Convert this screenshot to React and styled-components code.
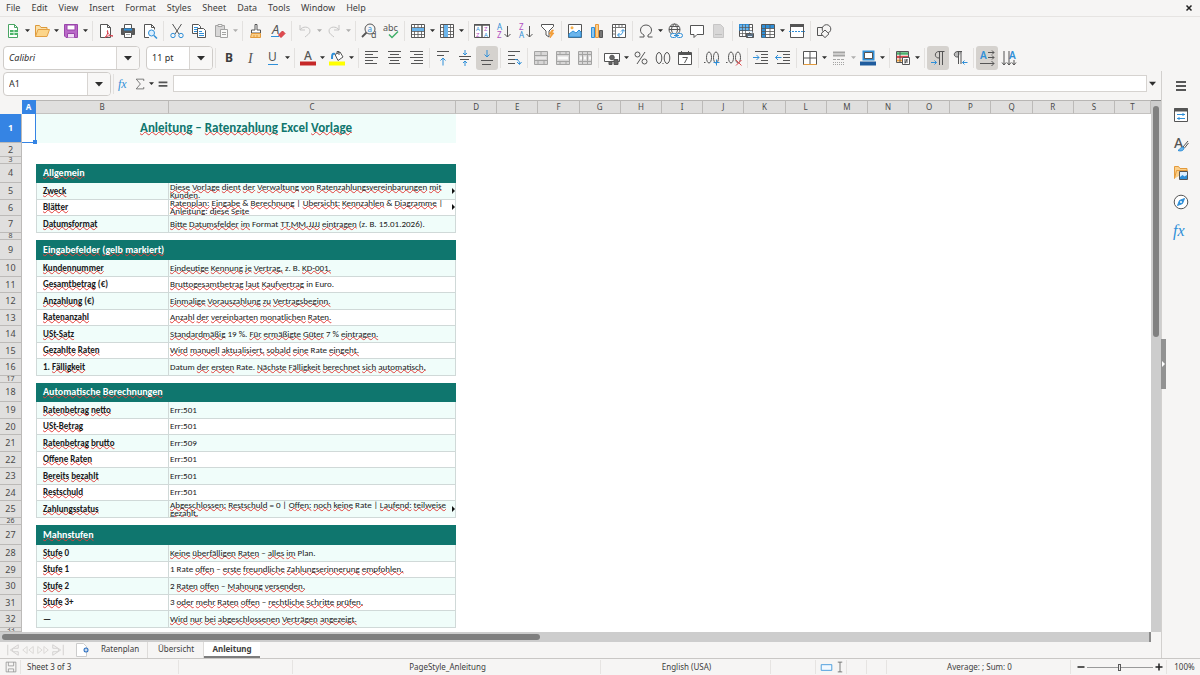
import React, { useState } from 'react';
import styled, { createGlobalStyle, css } from 'styled-components';

const UI_FONT = "'Noto Sans', 'Open Sans', sans-serif";
const SHEET_FONT = "Carlito, Lato, 'Noto Sans', sans-serif";

const dark = '#555';
const blue = '#2f8fd8';
const teal = '#0f766e';
const chrome = '#f6f5f4';

const GlobalStyle = createGlobalStyle`
  * { box-sizing: border-box; }
  body {
    margin: 0;
    background: ${chrome};
    color: #3d3d3d;
    font: 9px/12px ${UI_FONT};
  }
  button, input, select {
    font: inherit;
    color: inherit;
    margin: 0;
    padding: 0;
    border: 0;
    background: none;
  }
`;

const Window = styled.div`
  min-height: 100vh;
  display: flex;
  flex-direction: column;
`;

/* menu + toolbars */

const MenuBar = styled.nav`
  display: flex;
  align-items: center;
  height: 17px;
  padding: 0 7px 0 1px;
  border-bottom: 1px solid #e6e4e2;
`;

const MenuItem = styled.button`
  padding: 0 6px 0 5px;
`;

const CloseButton = styled.button`
  margin-left: auto;
  display: flex;
`;

const Toolbar = styled.div`
  display: flex;
  align-items: center;
  height: 27px;
  padding-left: 2px;
`;

const Tool = styled.button`
  flex: none;
  display: flex;
  align-items: center;
  justify-content: center;
  width: 22px;
  height: 24px;
  border-radius: 3px;
  background: ${p => (p.$pressed ? '#d5d2ce' : 'none')};
  opacity: ${p => (p.$off ? 0.5 : 1)};
`;

const Caret = styled.button`
  flex: none;
  width: 7px;
  height: 24px;
  display: flex;
  align-items: center;
  justify-content: center;
  opacity: ${p => (p.$off ? 0.35 : 1)};
`;

const Separator = styled.span`
  flex: none;
  width: 1px;
  height: 20px;
  margin: 0 2px;
  background: #e3e1df;

  ${Caret} + & {
    margin-left: 3px;
  }
`;

const Combo = styled.label`
  flex: none;
  display: grid;
  width: ${p => p.$width}px;
  height: 24px;
  margin: 0 ${p => p.$gap || 0}px 0 1px;
  border: 1px solid #cfccc9;
  border-radius: 4px;
  background: #fff;
  overflow: hidden;

  select {
    grid-area: 1 / 1;
    appearance: none;
    padding-left: 5px;
    color: #2e2e2e;
    font-style: ${p => (p.$italic ? 'italic' : 'normal')};
  }
`;

const ComboArrow = styled.span`
  grid-area: 1 / 1;
  justify-self: end;
  width: 23px;
  display: flex;
  align-items: center;
  justify-content: center;
  border-left: 1px solid #d8d5d2;
  background: #f8f7f6;
  pointer-events: none;
`;

/* work area */

const Workspace = styled.div`
  flex: 1;
  display: flex;
`;

const Document = styled.main`
  flex: 1;
  min-width: 0;
  display: flex;
  flex-direction: column;
`;

const FormulaBar = styled.div`
  display: flex;
  align-items: center;
  height: 29px;
  padding: 0 5px 4px 2px;
`;

const FormulaTool = styled(Tool)`
  width: 16px;
`;

const FormulaInput = styled.input`
  flex: 1;
  min-width: 0;
  height: 17px;
  margin: 0 2px;
  padding: 0 4px;
  border: 1px solid #d6d3d0;
  background: #fff;
`;

const SheetArea = styled.div`
  flex: 1;
  display: flex;
  background: #fff;
`;

const SheetView = styled.div`
  flex: 1;
  min-width: 0;
  overflow: hidden;
`;

const Grid = styled.table`
  table-layout: fixed;
  width: 100%;
  border-collapse: separate;
  border-spacing: 0;

  th, td {
    padding: 0;
  }
`;

const ColumnHead = styled.th`
  height: 14px;
  border-top: 1px solid #b8b6b4;
  border-right: 1px solid #bcbab8;
  border-bottom: 1px solid #c4c2c0;
  background: #e0dfde;
  color: #4a4a4a;
  font-size: 8px;
  font-weight: 400;
  line-height: 12px;

  ${p =>
    p.$active &&
    css`
      background: #3584e4;
      border-color: #3584e4;
      color: #fff;
      font-weight: 700;
    `}
`;

const Corner = styled.th`
  background: ${chrome};
`;

const RowHead = styled.th`
  border-right: 1px solid #bcbab8;
  border-bottom: 1px solid #bcbab8;
  background: ${p => (p.$active ? '#3584e4' : '#e0dfde')};
  color: ${p => (p.$active ? '#fff' : '#4a4a4a')};
  font-weight: ${p => (p.$active ? 700 : 400)};
`;

const RowNumber = styled.div`
  display: flex;
  align-items: center;
  justify-content: center;
  height: ${p => p.$height - 1}px;
  font-size: ${p => (p.$height < 10 ? 7 : 9)}px;
  overflow: hidden;
`;

const CellBox = styled.div`
  display: flex;
  align-items: center;
  height: ${p => p.$height - 1}px;
  padding-bottom: 1px;
  overflow: hidden;
`;

const Cell = styled.td`
  font-family: ${SHEET_FONT};
  font-size: 9px;
  line-height: 8px;
  color: #1a1a1a;
`;

const LabelCell = styled(Cell)`
  border: solid #d0d9d8;
  border-width: 0 1px 1px;
  background: ${p => (p.$tinted ? '#f0fdfa' : '#fff')};
  font-weight: 700;

  ${CellBox} {
    padding-left: 6px;
  }
`;

const TextCell = styled(Cell)`
  border: solid #d0d9d8;
  border-width: 0 1px 1px 0;
  background: ${p => (p.$tinted ? '#f0fdfa' : '#fff')};

  ${CellBox} {
    justify-content: space-between;
    padding-left: 1px;
    white-space: pre;
  }
`;

const SectionCell = styled(Cell)`
  background: ${teal};
  color: #fff;
  font-size: 10px;
  line-height: 12px;
  font-weight: 700;

  ${CellBox} {
    padding-left: 7px;
  }
`;

const TitleCell = styled(Cell)`
  background: #f0fdfa;
  color: ${teal};
  font-size: 13px;
  line-height: 16px;
  font-weight: 700;

  ${CellBox} {
    justify-content: center;
  }
`;

const ActiveCell = styled.td`
  position: relative;
  border-right: 1px solid #3584e4;
  border-bottom: 1px solid #3584e4;
  background: #fff;

  &::after {
    content: '';
    position: absolute;
    right: -2px;
    bottom: -2px;
    width: 4px;
    height: 4px;
    background: #3584e4;
  }
`;

const Misspelled = styled.span`
  text-decoration: underline wavy #e2403c 1px;
  text-underline-offset: -1px;
  text-decoration-skip-ink: none;
`;

const VScroll = styled.div`
  width: 10px;
  padding: 5px 2px 0;
  border-top: 1px solid #8a8a8a;
  background: #cdcdcd;
`;

const VThumb = styled.div`
  height: 44%;
  border-radius: 3px;
  background: #808080;
`;

const HScroll = styled.div`
  height: 10px;
  margin-right: 10px;
  padding: 2px;
  border-right: 2px solid #8a8a8a;
  background: #cdcdcd;
`;

const HThumb = styled.div`
  width: 47%;
  height: 6px;
  border-radius: 3px;
  background: #7f7f7f;
`;

const TabBar = styled.div`
  display: flex;
  align-items: center;
  height: 16px;
  padding-left: 6px;
  font-size: 8px;
`;

const TabNav = styled.button`
  display: flex;
  width: 15px;
`;

const AddSheet = styled.button`
  display: flex;
  margin: 0 2px 0 8px;
`;

const Tab = styled.button`
  height: 16px;
  width: 56px;
  border-bottom: 2px solid ${p => (p.$active ? '#7d7d7d' : 'transparent')};
  background: ${p => (p.$active ? '#fff' : 'none')};
  font-weight: ${p => (p.$active ? 700 : 400)};

  & + & {
    box-shadow: -1px 0 0 #dddbd9;
  }
`;

const Sidebar = styled.aside`
  position: relative;
  width: 39px;
  display: flex;
  flex-direction: column;
  align-items: center;
  gap: 5px;
  padding-top: 3px;
  border-left: 1px solid #d2d0ce;
`;

const SidebarHandle = styled.button`
  position: absolute;
  left: -1px;
  top: 268px;
  width: 5px;
  height: 50px;
  display: flex;
  align-items: center;
  background: #929292;
`;

const StatusBar = styled.footer`
  display: grid;
  grid-template-columns:
    21px 158fr 114fr 308fr 170fr 45fr 31px 20px 20px
    184fr 96px 33px;
  align-items: center;
  height: 17px;
  border-top: 1px solid #c9c7c5;
  font-size: 8px;
`;

const StatusItem = styled.div`
  display: flex;
  align-items: center;
  justify-content: ${p => (p.$start ? 'flex-start' : 'center')};
  height: 14px;
  padding-left: ${p => (p.$start ? 6 : 2)}px;
  border-right: 1px solid #e6e4e2;

  &:last-child {
    border: 0;
  }
`;

const ModeItem = styled(StatusItem)`
  justify-content: flex-end;
  gap: 1px;
`;

const ZoomItem = styled(StatusItem)`
  gap: 2px;

  button {
    display: flex;
  }
`;

const ZoomRange = styled.input`
  appearance: none;
  width: 66px;
  height: 10px;
  background: linear-gradient(#9a9a9a, #9a9a9a) center / 100% 1px no-repeat;

  &::-webkit-slider-thumb {
    appearance: none;
    width: 3px;
    height: 7px;
    border: 1px solid #5a5a5a;
    background: #eee;
  }
`;

/* icons, all on a 16px field */

const Svg = ({ children, size = 16 }) => (
  <svg
    width={size}
    height={size}
    viewBox="0 0 16 16"
    overflow="visible"
    fill="none"
    stroke={dark}
    strokeWidth="1"
    aria-hidden="true"
  >
    {children}
  </svg>
);

const Arrow = ({ size = 5, color = '#2e2e2e' }) => (
  <svg width={size} height={size} viewBox="0 0 8 8" aria-hidden="true">
    <path d="M0 2h8L4 6.500z" fill={color} />
  </svg>
);

const G = ({ x, y, s = 7, c = dark, i, f = UI_FONT, children, w = 400 }) => (
  <text
    x={x}
    y={y}
    fontSize={s}
    fill={c}
    stroke="none"
    fontFamily={f}
    fontStyle={i ? 'italic' : 'normal'}
    fontWeight={w}
  >
    {children}
  </text>
);

const lines = (list, color = dark) => (
  <path
    stroke={color}
    d={list.map(([x1, x2, y]) => `M${x1} ${y}.5H${x2}`).join('')}
  />
);

const icons = {
  new: (
    <>
      <path d="M3.500 1.500h6l3 3v10h-9z" fill="#fff" stroke="#4aa564" />
      <path d="M9.500 1.500v3h3" stroke="#4aa564" />
      <path d="M5 7h8v5H5z" fill="#4db36a" stroke="none" />
      <path d="M5 9.500h8M9 7v5" stroke="#d6f2dc" />
    </>
  ),
  open: (
    <>
      <path d="M1.500 13.500v-11h4l1.500 2h6v2" fill="#fbe0a8" stroke="#dd9a3b" />
      <path d="M1.500 13.500l2.500-7h11.500l-2.500 7z" fill="#fcd58a" stroke="#e3a044" />
    </>
  ),
  save: (
    <>
      <path d="M1.500 1.500h13v13H3l-1.500-1.500z" fill="#b968c7" stroke="#9a45ab" />
      <path d="M4 2h8v5H4z" fill="#fff" stroke="#9a45ab" />
      <path d="M4.500 14.500v-4h7v4" fill="#f0dcf4" stroke="#9a45ab" />
    </>
  ),
  pdf: (
    <>
      <path d="M2.500 1.500h7l3 3v10h-10z" fill="#fff" />
      <path d="M9.500 1.500v3h3" />
      <path d="M7 14.500c2-2 3.500-5 2.500-7-1 2 2 5.500 5.500 5.500-3-1-6 0-8 1.500z" stroke="#d9414e" />
    </>
  ),
  print: (
    <>
      <path d="M4.500 5V1.500h7V5" fill="#fff" />
      <path d="M1.500 5.500h13v6h-13z" fill="#5a5a5a" />
      <path d="M4 6.500h8" stroke={blue} strokeWidth="2" />
      <path d="M4.500 9.500h7v5h-7z" fill="#fff" />
      <path d="M6 11.500h4" stroke="#aaa" />
    </>
  ),
  preview: (
    <>
      <path d="M7 14.500H2.500v-13h7l3 3v2" fill="#fff" />
      <path d="M9.500 1.500v3h3" />
      <circle cx="9.500" cy="10" r="3" stroke={blue} fill="#dcefff" />
      <path d="M12 12.500l3 3" stroke={blue} strokeWidth="1.500" />
    </>
  ),
  cut: (
    <>
      <path d="M3.500 1l6.500 10M12.500 1L6 11" />
      <circle cx="4" cy="12.500" r="2.200" stroke={blue} />
      <circle cx="12" cy="12.500" r="2.200" stroke={blue} />
    </>
  ),
  copy: (
    <>
      <path d="M1.500 1.500h6l2 2v7h-8z" fill="#fff" />
      <path d="M3 4.500h4M3 6.500h4M3 8.500h3" stroke={blue} />
      <path d="M6.500 5.500h6l2 2v7h-8z" fill="#fff" />
      <path d="M8 8.500h3M8 10.500h5M8 12.500h5" stroke={blue} />
    </>
  ),
  paste: (
    <>
      <path d="M2.500 2.500h9v11h-9z" fill="#bbb" />
      <path d="M5 1.500h4v2H5z" fill="#fff" />
      <path d="M7.500 6.500h7v8h-7z" fill="#fff" />
      <path d="M9 9.500h4M9 11.500h4" />
    </>
  ),
  brush: (
    <>
      <path d="M7 1.500h2V7h3.500v3h-9V7H7z" fill="#fff" />
      <path d="M3.500 10.500h9v4h-10z" fill="#fbd08b" stroke="#e39a3b" />
      <path d="M6 12v2M9 12v2" stroke="#e39a3b" />
    </>
  ),
  clear: (
    <>
      <G x={2} y={11} s={13} i>A</G>
      <path d="M1 13.500h8" stroke={blue} />
      <path d="M8.500 12l4-4 2.500 2.500-4 4z" fill="#e04a4f" stroke="#d0393f" />
    </>
  ),
  undo: <path d="M3 2v5h5M3 7c2-4 10-4 10 1 0 3-3 4-5 6" stroke="#999" />,
  redo: <path d="M13 2v5H8M13 7C11 3 3 3 3 8c0 3 3 4 5 6" stroke="#999" />,
  find: (
    <>
      <circle cx="9" cy="6" r="5" />
      <path d="M5.500 9.500L1 14" strokeWidth="1.800" />
      <G x={6.500} y={9} s={8} c={blue}>a</G>
      <G x={10} y={15} s={9}>d</G>
    </>
  ),
  spell: (
    <>
      <G x={0} y={8} s={9}>abc</G>
      <path d="M6 11.500l3 3L15 8.500" stroke="#41b06a" strokeWidth="1.500" />
    </>
  ),
  row: (
    <>
      <path d="M1.500 1.500h13v13h-13z" fill="#fff" />
      <path d="M1.500 4.500h13M1.500 8.500h13M1.500 11.500h13M4.500 1.500v13M8 1.500v13M11.500 1.500v13" strokeWidth=".8" />
      <path d="M2 5h12v3H2z" fill="#6bb5ec" stroke="none" />
    </>
  ),
  col: (
    <>
      <path d="M1.500 1.500h13v13h-13z" fill="#fff" />
      <path d="M1.500 4.500h13M1.500 8.500h13M1.500 11.500h13M4.500 1.500v13M11.500 1.500v13" strokeWidth=".8" />
      <path d="M5 2h4v12H5z" fill="#6bb5ec" stroke="none" />
    </>
  ),
  sort: (
    <>
      <path d="M.5 1.500h15v13H.5z" fill="#fff" />
      <path d="M0 2h16M8 2v13" strokeWidth="1.500" />
      <G x={2} y={8} s={6} c={blue}>A</G>
      <G x={2} y={14} s={6} c="#b14fc0">Z</G>
      <G x={10} y={8} s={6} c="#b14fc0">Z</G>
      <G x={10} y={14} s={6} c={blue}>A</G>
    </>
  ),
  asc: (
    <>
      <G x={1} y={7} s={8} c={blue}>A</G>
      <G x={1} y={15} s={8} c="#b14fc0">Z</G>
      <path d="M11.500 3v11M8.500 11l3 3 3-3" />
    </>
  ),
  desc: (
    <>
      <G x={1} y={7} s={8} c="#b14fc0">Z</G>
      <G x={1} y={15} s={8} c={blue}>A</G>
      <path d="M11.500 3v11M8.500 11l3 3 3-3" />
    </>
  ),
  filter: (
    <>
      <path d="M1.500 1.500h12v2L9 8v6l-3-2V8L1.500 3.500z" fill="#fff" />
      <path d="M12 7l-3 4h2l-1 4 4-5h-2l1.500-3z" fill="#f3a33c" stroke="#f08c1e" strokeWidth=".6" />
    </>
  ),
  image: (
    <>
      <path d="M1.500 1.500h13v13h-13z" fill="#fff" />
      <path d="M2 13V11l4-3 3 2 3-3 2 2v5H2z" fill="#6bb5ec" stroke={blue} />
      <circle cx="5" cy="4.800" r="1.500" fill="#f6b04e" stroke="none" />
    </>
  ),
  chart: (
    <>
      <path d="M2.500 4.500h3v10h-3z" fill="#8cc8f2" stroke={blue} />
      <path d="M6.500 1.500h3v13h-3z" fill="#fbd08b" stroke="#e8963a" />
      <path d="M10.500 7.500h3v7h-3z" fill="#777" />
    </>
  ),
  pivot: (
    <>
      <path d="M1.500 1.500h13v13h-13z" fill="#fff" />
      <path d="M2 4.500h12M4.500 2v12M8 2v2M11 2v2M2 8h2M2 11h2" stroke="#777" />
      <path d="M7 12c4 0 5-2 5-5M10 8.500l2-2 2 2M8.500 10l-2 2 2 2" stroke={blue} />
    </>
  ),
  omega: (
    <path d="M1.500 14h4.500v-2C3.500 11 2.500 9 2.500 7c0-3 2.500-5 5.500-5s5.500 2 5.500 5c0 2-1 4-3.500 5v2h4.500" />
  ),
  link: (
    <>
      <circle cx="7.500" cy="6.500" r="5.500" />
      <path d="M2 6.500h11M7.500 1c-4 3-4 8 0 11M7.500 1c4 3 4 8 0 11M3 3.500h9" />
      <rect x="3.500" y="10.500" width="6" height="4" rx="2" fill={chrome} stroke={blue} />
      <rect x="9.500" y="10.500" width="6" height="4" rx="2" fill={chrome} stroke={blue} />
      <path d="M7 12.500h5" stroke={blue} />
    </>
  ),
  comment: <path d="M1.500 2.500h13v9H8l-3 3v-3H1.500z" fill="#fff" />,
  header: (
    <>
      <path d="M2.500 1.500h7l3 3v10h-10z" fill="#bbb" stroke="#999" />
      <path d="M4 11.500h7" stroke="#888" />
    </>
  ),
  printArea: (
    <>
      <path d="M1.500 1.500h13v12h-13z" fill="#fff" />
      <path d="M1.500 1.500h9v6h-9z" fill="#6bb5ec" stroke={blue} />
      <path d="M1.500 4.500h13M1.500 7.500h13M1.500 10.500h13M4.500 1.500v12M7.500 1.500v12M11.500 1.500v12" strokeWidth=".7" />
      <path d="M8.500 10.500h7v4h-7z" fill="#5a6f82" />
      <path d="M10 8.500h4v2M10 13.500h4" stroke="#dcefff" />
    </>
  ),
  freeze: (
    <>
      <path d="M1.500 1.500h13v13h-13z" fill="#fff" />
      <path d="M2 2h12v3.500H6v9H2z" fill={blue} stroke="none" />
      <path d="M1.500 5.500h13M1.500 8.500h13M1.500 11.500h13M5.500 1.500v13M10 1.500v13" strokeWidth=".8" />
    </>
  ),
  split: (
    <>
      <path d="M1.500 1.500h13v13h-13z" fill="#fff" />
      <path d="M1 2.500h14" strokeWidth="3" />
      <path d="M0 8.500h16" stroke={blue} strokeDasharray="2 1" />
    </>
  ),
  shapes: (
    <>
      <path d="M1.500 4.500h7v8h-7z" fill={chrome} />
      <circle cx="10.500" cy="6" r="4.300" fill={chrome} />
      <path d="M9 7l4 3.800-4 3.800-4-3.800z" fill={chrome} />
    </>
  ),
  bold: <G x={4} y={12} s={12} w={700} c="#3d3d3d">B</G>,
  italic: <G x={5} y={13} s={14} i f="'Liberation Serif', serif">I</G>,
  underline: (
    <>
      <G x={3} y={11} s={12}>U</G>
      <path d="M3 14.500h10" stroke={blue} />
    </>
  ),
  fontColor: (
    <>
      <G x={4} y={10} s={12} w={500}>A</G>
      <path d="M0 13.500h16" stroke="#c62828" strokeWidth="4" />
    </>
  ),
  fill: (
    <>
      <path d="M6 4.500l5-2.500 3 5-5 3.500z" fill="#fff" />
      <path d="M8 4V1.500h2V5" />
      <path d="M6 4C3 3 3 5 3 9" stroke={blue} strokeWidth="2" />
      <path d="M0 13.500h16" stroke="#ffff00" strokeWidth="4" />
    </>
  ),
  left: lines([[1, 14, 1], [1, 9, 4], [1, 14, 7], [1, 9, 10], [1, 13, 13]]),
  center: lines([[2, 15, 1], [4, 13, 4], [2, 15, 7], [4, 13, 10], [3, 14, 13]]),
  right: lines([[2, 15, 1], [6, 15, 4], [2, 15, 7], [6, 15, 10], [3, 15, 13]]),
  vtop: (
    <>
      {lines([[2, 14, 1], [2, 9, 5]])}
      <path d="M8 15.500V8M5.500 10.500L8 8l2.500 2.500" stroke={blue} />
    </>
  ),
  vmid: (
    <>
      {lines([[2, 14, 6], [3, 12, 9]])}
      <path d="M8 0v4.500M6 3l2 2 2-2M8 16v-4.500M6 13l2-2 2 2" stroke={blue} />
    </>
  ),
  vbot: (
    <>
      {lines([[2, 14, 10], [3, 12, 14]])}
      <path d="M8 0v7M5.500 4.500L8 7l2.500-2.500" stroke={blue} />
    </>
  ),
  wrap: (
    <>
      {lines([[2, 14, 1], [2, 9, 5], [2, 12, 9], [2, 9, 13]])}
      <path d="M9 9.500c3 0 4.500 1 4.500 4.500M11 12l2.500 2.500L15.500 12" stroke={blue} />
    </>
  ),
  merge: (
    <>
      <path d="M1.500 1.500h13v13h-13z" fill="#bbb" />
      <path d="M2 5.500h13M2 10.500h13M8 2v3M5 11v3M11 11v3" />
      <path d="M3 8h10" stroke="#fff" />
    </>
  ),
  mergeCenter: (
    <>
      <path d="M1.500 1.500h13v13h-13z" fill="#bbb" />
      <path d="M2 4.500h13M2 11.500h13M5 2v2M11 2v2M5 12v2M11 12v2" />
      <path d="M3 8h10" stroke="#fff" strokeWidth="3" />
    </>
  ),
  unmerge: (
    <>
      <path d="M1.500 1.500h13v13h-13z" fill="#bbb" />
      <path d="M2 4.500h13M2 11.500h13M5.500 2v12M10.500 2v12" />
      <path d="M3 8h2M7 8h2M12 8h2" stroke="#fff" strokeWidth="3" />
    </>
  ),
  currency: (
    <>
      <path d="M.5 3.500h15v8H.5z" fill="#fff" />
      <circle cx="8" cy="7.500" r="2.300" fill="#666" />
      <path d="M5 11.500h3v3H5zM10 9.500h4v5h-4z" fill="#666" />
    </>
  ),
  percent: (
    <>
      <circle cx="4.500" cy="4.500" r="2.500" />
      <circle cx="11.500" cy="11.500" r="2.500" />
      <path d="M12 2L4 14" />
    </>
  ),
  number: (
    <>
      <ellipse cx="4" cy="8" rx="2.800" ry="5.500" />
      <ellipse cx="12" cy="8" rx="2.800" ry="5.500" />
      <path d="M7.500 13.500h1" />
    </>
  ),
  date: (
    <>
      <path d="M1.500 2.500h13v12h-13z" fill="#fff" />
      <path d="M1 4h14" strokeWidth="2" />
      <path d="M4.500 1v3M11.500 1v3M5.500 7.500h5L7.500 13" />
    </>
  ),
  addDec: (
    <>
      <ellipse cx="5" cy="7.500" rx="2.500" ry="5.500" />
      <ellipse cx="12" cy="7.500" rx="2.500" ry="5.500" />
      <path d="M0 12.500h1.500" />
      <path d="M12.500 9.500v6M9.500 12.500h6" stroke={blue} />
    </>
  ),
  delDec: (
    <>
      <ellipse cx="5" cy="7.500" rx="2.500" ry="5.500" />
      <ellipse cx="12" cy="7.500" rx="2.500" ry="5.500" />
      <path d="M0 12.500h1.500" />
      <path d="M10 10l5.500 5.500M15.500 10L10 15.500" stroke="#e04a4f" />
    </>
  ),
  indent: (
    <>
      {lines([[2, 15, 1], [8, 15, 4], [8, 15, 7], [8, 15, 10], [2, 15, 13]])}
      <path d="M0 7.500h6M3.500 5L6 7.500 3.500 10" stroke={blue} />
    </>
  ),
  outdent: (
    <>
      {lines([[2, 15, 1], [8, 15, 4], [8, 15, 7], [8, 15, 10], [2, 15, 13]])}
      <path d="M6.500 7.500H.5M3 5L.5 7.500 3 10" stroke={blue} />
    </>
  ),
  borders: (
    <>
      <path d="M1.500 1.500h13v13h-13zM8 1.500v13M1.500 8h13" fill="#fff" />
      <path d="M1.500 14.500h13" stroke="#e39a3b" />
    </>
  ),
  borderStyle: (
    <>
      <path d="M2 2.500h12M2 5.500h12" strokeWidth="2" />
      <path d="M2 9.500h12" strokeDasharray="3 1" />
      <path d="M2 12.500h12M2 14.500h12" strokeDasharray="1 1" />
    </>
  ),
  borderColor: (
    <>
      <path d="M3.500 1.500h10v8h-10z" fill="#fff" stroke={blue} strokeWidth="2" />
      <path d="M4.500 2.500h8v6h-8z" />
      <path d="M0 13.500h16" stroke="#1f5c9e" strokeWidth="4" />
    </>
  ),
  conditional: (
    <>
      <path d="M1.500 1.500h12v11h-12z" fill="#fff" />
      <path d="M2 3.500h11" stroke="#4bb06d" strokeWidth="2.500" />
      <path d="M2 7h11" stroke="#e04a4f" strokeWidth="2.500" />
      <path d="M2 10.500h11" stroke="#f3a33c" strokeWidth="2" />
      <path d="M5 1.500v11" />
      <path d="M7.500 7.500h7v7h-7z" fill="#fff" />
      <path d="M9 10h4M9 12h4M12 9l-2 4.500" />
    </>
  ),
  ltr: (
    <>
      <path d="M9.500 8C4 8.500 4 1.500 9 1.500h5.500M9.500 1.500V15M12.500 1.500V15" />
      <path d="M1 12.500h5.500M4.500 10.500l2 2-2 2" stroke={blue} />
    </>
  ),
  rtl: (
    <>
      <path d="M6 7C1 7.500 1 1.500 6 1.500h4M6.500 1.500V14M9 1.500V14" fill="#bbb" />
      <path d="M15.500 12.500h-5M12.500 10.500l-2 2 2 2" stroke={blue} />
    </>
  ),
  horizontal: (
    <>
      <G x={1} y={9} s={10} c={blue} w={600}>A</G>
      <path d="M9 2.500h6M13 .5l2 2-2 2M9 7.500h6M13 5.500l2 2-2 2M1 13.500h14M12.500 11l2.500 2.500-2.500 2.500" />
    </>
  ),
  vertical: (
    <>
      <G x={8} y={9} s={10} c={blue} w={600}>A</G>
      <path d="M3 1v14M1 12.500L3 15l2-2.500M8 1v14M6 12.500L8 15l2-2.500M13 10v5M11 12.500l2 2.500 2-2.500" />
    </>
  ),
  fx: (
    <G x={0} y={13} s={16} c={blue} i f="'Liberation Serif', serif">fx</G>
  ),
  sigma: <path d="M13 4V1.500H3L8.500 8 3 14.500h10V12" />,
  equals: <path d="M3 6h10M3 10h10" strokeWidth="2" />,
  menu: <path d="M3 4h10M3 8h10M3 12h10" stroke="#222" strokeWidth="1.500" />,
  properties: (
    <>
      <path d="M1.500 1.500h13v13h-13z" fill="#fff" />
      <path d="M1 3h14" strokeWidth="3" />
      <path d="M4 7.500h8M4 11.500h8M10 6v3M6 10v3" stroke={blue} />
    </>
  ),
  styles: (
    <>
      <G x={1} y={12} s={14} w={500}>A</G>
      <path d="M15 5l-5 6M15.500 7l-4 5" />
      <path d="M10 11c-2 0-3 2-5 3.500 3 1 6 0 6-2.500z" fill="#6bb5ec" stroke={blue} />
    </>
  ),
  gallery: (
    <>
      <path d="M1.500 13.500v-12h4l1.500 2h7v3M1.500 13.500l2-8h11" fill="#fbd08b" stroke="#e39a3b" />
      <path d="M6.500 6.500h8v8h-8z" fill="#dcefff" />
      <path d="M7 14v-2l2.500-2 2 1.500L14 10v4z" fill={blue} stroke="none" />
    </>
  ),
  navigator: (
    <>
      <circle cx="8" cy="8" r="6.800" fill="#fff" />
      <path d="M11.500 4.500L9.500 9.500l-5 2L6.500 6.500z" fill={blue} stroke={blue} />
      <circle cx="8" cy="8" r="1" fill="#fff" stroke="none" />
    </>
  ),
  first: <path d="M2 2v12M14 2L5 8l9 6v-4H9l-2-2 2-2h5z" stroke="#cfcdcb" />,
  prev: <path d="M7 4L2 8l5 4zM14 4L9 8l5 4z" stroke="#d8d6d4" />,
  next: <path d="M2 4l5 4-5 4zM9 4l5 4-5 4z" stroke="#d8d6d4" />,
  last: <path d="M14 2v12M2 2l9 6-9 6v-4h5l2-2-2-2H2z" stroke="#cfcdcb" />,
  addSheet: (
    <>
      <path d="M2.500 1.500h7l3 3v10h-10z" fill="#fff" stroke="#ccc" />
      <circle cx="12" cy="8" r="2.500" fill="#2b6fc0" stroke="none" />
      <path d="M12 6.500v3M10.500 8h3" stroke="#fff" />
    </>
  ),
  saved: (
    <path
      d="M1.500 1.500h13v13h-13zM4.500 1.500v5h7v-5M4.500 14.500v-4h7v4"
      stroke="#8f8f8f"
    />
  ),
  selection: <path d="M1.500 4.500h13v7h-13z" stroke={blue} fill="#f2f9ff" />,
  cursor: <path d="M5 1.500h6M8 1.500v13M5 14.500h6" />,
  minus: <path d="M1 8h14" stroke="#222" strokeWidth="3" />,
  plus: <path d="M1 8h14M8 1v14" stroke="#222" strokeWidth="3" />,
  close: <path d="M3 3l10 10M13 3L3 13" stroke="#222" strokeWidth="3" />
};

/* [icon, label, options]; '|' is a separator */
const standardTools = [
  ['new', 'New', { menu: true }],
  ['open', 'Open', { menu: true }],
  ['save', 'Save', { menu: true }],
  '|',
  ['pdf', 'Export as PDF'],
  ['print', 'Print'],
  ['preview', 'Print Preview'],
  '|',
  ['cut', 'Cut'],
  ['copy', 'Copy'],
  ['paste', 'Paste', { menu: true, off: true }],
  '|',
  ['brush', 'Clone Formatting'],
  ['clear', 'Clear Direct Formatting'],
  '|',
  ['undo', 'Undo', { menu: true, off: true }],
  ['redo', 'Redo', { menu: true, off: true }],
  '|',
  ['find', 'Find & Replace'],
  ['spell', 'Spelling'],
  '|',
  ['row', 'Row', { menu: true }],
  ['col', 'Column', { menu: true }],
  '|',
  ['sort', 'Sort'],
  ['asc', 'Sort Ascending'],
  ['desc', 'Sort Descending'],
  ['filter', 'AutoFilter'],
  '|',
  ['image', 'Insert Image'],
  ['chart', 'Insert Chart'],
  ['pivot', 'Insert Pivot Table'],
  '|',
  ['omega', 'Special Character', { menu: true }],
  ['link', 'Insert Hyperlink'],
  ['comment', 'Insert Comment'],
  ['header', 'Headers and Footers', { off: true }],
  '|',
  ['printArea', 'Define Print Area'],
  ['freeze', 'Freeze Rows and Columns', { menu: true }],
  ['split', 'Split Window'],
  '|',
  ['shapes', 'Show Draw Functions']
];

const formatTools = [
  '|',
  ['bold', 'Bold'],
  ['italic', 'Italic'],
  ['underline', 'Underline', { menu: true }],
  '|',
  ['fontColor', 'Font Color', { menu: true }],
  ['fill', 'Background Color', { menu: true }],
  '|',
  ['left', 'Align Left'],
  ['center', 'Center Horizontally'],
  ['right', 'Align Right'],
  '|',
  ['vtop', 'Align Top'],
  ['vmid', 'Center Vertically'],
  ['vbot', 'Align Bottom', { pressed: true }],
  '|',
  ['wrap', 'Wrap Text'],
  '|',
  ['merge', 'Merge and Center', { off: true }],
  ['mergeCenter', 'Merge Cells', { off: true }],
  ['unmerge', 'Unmerge Cells', { off: true }],
  '|',
  ['currency', 'Currency', { menu: true }],
  ['percent', 'Percent'],
  ['number', 'Number'],
  ['date', 'Date'],
  '|',
  ['addDec', 'Add Decimal Place'],
  ['delDec', 'Delete Decimal Place'],
  '|',
  ['indent', 'Increase Indent'],
  ['outdent', 'Decrease Indent'],
  '|',
  ['borders', 'Borders', { menu: true }],
  ['borderStyle', 'Border Style', { menu: true, off: true }],
  ['borderColor', 'Border Color', { menu: true }],
  '|',
  ['conditional', 'Conditional Formatting', { menu: true }],
  '|',
  ['ltr', 'Left-To-Right', { pressed: true }],
  ['rtl', 'Right-To-Left'],
  '|',
  ['horizontal', 'Text direction left to right', { pressed: true }],
  ['vertical', 'Text direction top to bottom']
];

const sidebarTools = [
  ['menu', 'Sidebar Settings'],
  ['properties', 'Properties'],
  ['styles', 'Styles'],
  ['gallery', 'Gallery'],
  ['navigator', 'Navigator'],
  ['fx', 'Functions']
];

const menus = [
  'File', 'Edit', 'View', 'Insert', 'Format', 'Styles',
  'Sheet', 'Data', 'Tools', 'Window', 'Help'
];

const restColumns = 'DEFGHIJKLMNOPQRST'.split('');

const rows = [
  { h: 29, title: 'Anleitung – Ratenzahlung Excel Vorlage' },
  { h: 14 },
  { h: 7 },
  { h: 19, section: 'Allgemein' },
  {
    h: 17,
    label: 'Zweck',
    text:
      'Diese Vorlage dient der Verwaltung von Ratenzahlungsvereinbarungen mit\nKunden.',
    more: true,
    tinted: true
  },
  {
    h: 16,
    label: 'Blätter',
    text:
      'Ratenplan: Eingabe & Berechnung | Übersicht: Kennzahlen & Diagramme |\nAnleitung: diese Seite',
    more: true
  },
  {
    h: 17,
    label: 'Datumsformat',
    text: 'Bitte Datumsfelder im Format TT.MM.JJJJ eintragen (z. B. 15.01.2026).',
    tinted: true
  },
  { h: 7 },
  { h: 20, section: 'Eingabefelder (gelb markiert)' },
  { h: 17, label: 'Kundennummer', text: 'Eindeutige Kennung je Vertrag, z. B. KD-001.', tinted: true },
  { h: 16, label: 'Gesamtbetrag (€)', text: 'Bruttogesamtbetrag laut Kaufvertrag in Euro.' },
  { h: 17, label: 'Anzahlung (€)', text: 'Einmalige Vorauszahlung zu Vertragsbeginn.', tinted: true },
  { h: 16, label: 'Ratenanzahl', text: 'Anzahl der vereinbarten monatlichen Raten.' },
  { h: 17, label: 'USt-Satz', text: 'Standardmäßig 19 %. Für ermäßigte Güter 7 % eintragen.', tinted: true },
  { h: 16, label: 'Gezahlte Raten', text: 'Wird manuell aktualisiert, sobald eine Rate eingeht.' },
  {
    h: 17,
    label: '1. Fälligkeit',
    text: 'Datum der ersten Rate. Nächste Fälligkeit berechnet sich automatisch.',
    tinted: true
  },
  { h: 7 },
  { h: 19, section: 'Automatische Berechnungen' },
  { h: 17, label: 'Ratenbetrag netto', text: 'Err:501', tinted: true },
  { h: 16, label: 'USt-Betrag', text: 'Err:501' },
  { h: 17, label: 'Ratenbetrag brutto', text: 'Err:509', tinted: true },
  { h: 16, label: 'Offene Raten', text: 'Err:501' },
  { h: 17, label: 'Bereits bezahlt', text: 'Err:501', tinted: true },
  { h: 16, label: 'Restschuld', text: 'Err:501' },
  {
    h: 17,
    label: 'Zahlungsstatus',
    text:
      'Abgeschlossen: Restschuld = 0 | Offen: noch keine Rate | Laufend: teilweise\ngezahlt.',
    more: true,
    tinted: true
  },
  { h: 7 },
  { h: 20, section: 'Mahnstufen' },
  { h: 17, label: 'Stufe 0', text: 'Keine überfälligen Raten – alles im Plan.', tinted: true },
  { h: 16, label: 'Stufe 1', text: '1 Rate offen – erste freundliche Zahlungserinnerung empfohlen.' },
  { h: 17, label: 'Stufe 2', text: '2 Raten offen – Mahnung versenden.', tinted: true },
  { h: 16, label: 'Stufe 3+', text: '3 oder mehr Raten offen – rechtliche Schritte prüfen.' },
  { h: 17, label: '—', text: 'Wird nur bei abgeschlossenen Verträgen angezeigt.', tinted: true },
  { h: 4 }
];

// words the English (USA) dictionary accepts
const known = ['Format', 'in', 'Euro', 'Rate', 'Datum', 'Plan', 'Excel', 'z', 'B', 'Err'];

const Spelled = ({ children }) =>
  children.split(/(\s+)/).map((word, i) => {
    const bare = word.replace(/[^\p{L}]/gu, '');
    if (!bare || known.includes(bare)) {
      return word;
    }
    return <Misspelled key={i}>{word}</Misspelled>;
  });

const Tools = ({ items }) =>
  items.map((item, i) => {
    if (item === '|') {
      return <Separator key={i} />;
    }
    const [icon, label, opts = {}] = item;
    return (
      <React.Fragment key={i}>
        <Tool aria-label={label} $pressed={opts.pressed} $off={opts.off}>
          <Svg>{icons[icon]}</Svg>
        </Tool>
        {opts.menu && (
          <Caret aria-label={label + ' options'} $off={opts.off}>
            <Arrow />
          </Caret>
        )}
      </React.Fragment>
    );
  });

const DropDown = ({ label, value, ...rest }) => (
  <Combo {...rest}>
    <select aria-label={label} defaultValue={value}>
      <option>{value}</option>
    </select>
    <ComboArrow>
      <Arrow size={8} />
    </ComboArrow>
  </Combo>
);

const SheetRow = ({ row, number }) => {
  const { h, title, section, label, text, more, tinted } = row;
  return (
    <tr>
      <RowHead scope="row" $active={number === 1}>
        <RowNumber $height={h}>{number}</RowNumber>
      </RowHead>
      {title ? <ActiveCell /> : <td />}
      {title && (
        <TitleCell colSpan={2}>
          <CellBox $height={h}>
            <span>
              <Spelled>{title}</Spelled>
            </span>
          </CellBox>
        </TitleCell>
      )}
      {section && (
        <SectionCell colSpan={2}>
          <CellBox $height={h}>
            <span>
              <Spelled>{section}</Spelled>
            </span>
          </CellBox>
        </SectionCell>
      )}
      {label && (
        <>
          <LabelCell $tinted={tinted}>
            <CellBox $height={h}>
              <span>
                <Spelled>{label}</Spelled>
              </span>
            </CellBox>
          </LabelCell>
          <TextCell $tinted={tinted}>
            <CellBox $height={h}>
              <span>
                <Spelled>{text}</Spelled>
              </span>
              {more && (
                <svg width="3" height="6" viewBox="0 0 3 6" aria-hidden="true">
                  <path d="M0 0l3 3-3 3z" fill="#111" />
                </svg>
              )}
            </CellBox>
          </TextCell>
        </>
      )}
      {!title && !section && !label && <td colSpan={2} />}
      <td colSpan={restColumns.length} />
    </tr>
  );
};

const Sheet = () => (
  <Grid>
    <colgroup>
      <col width="22" />
      <col width="14" />
      <col width="133" />
      <col width="287" />
      {restColumns.map(c => (
        <col key={c} width={c === 'T' ? 36 : undefined} />
      ))}
    </colgroup>
    <thead>
      <tr>
        <Corner />
        <ColumnHead $active>A</ColumnHead>
        <ColumnHead>B</ColumnHead>
        <ColumnHead>C</ColumnHead>
        {restColumns.map(c => (
          <ColumnHead key={c}>{c}</ColumnHead>
        ))}
      </tr>
    </thead>
    <tbody>
      {rows.map((row, i) => (
        <SheetRow key={i} row={row} number={i + 1} />
      ))}
    </tbody>
  </Grid>
);

const App = () => {
  const [tab, setTab] = useState('Anleitung');
  const [zoom, setZoom] = useState(100);

  return (
    <Window>
      <GlobalStyle />
      <MenuBar>
        {menus.map(m => (
          <MenuItem key={m}>{m}</MenuItem>
        ))}
        <CloseButton aria-label="Close Document">
          <Svg size={8}>{icons.close}</Svg>
        </CloseButton>
      </MenuBar>
      <Toolbar>
        <Tools items={standardTools} />
      </Toolbar>
      <Toolbar>
        <DropDown label="Font Name" value="Calibri" $width={137} $gap={5} $italic />
        <DropDown label="Font Size" value="11 pt" $width={67} />
        <Tools items={formatTools} />
      </Toolbar>
      <Workspace>
        <Document>
          <FormulaBar>
            <DropDown label="Name Box" value="A1" $width={108} />
            <Separator />
            <FormulaTool aria-label="Function Wizard">
              <Svg size={12}>{icons.fx}</Svg>
            </FormulaTool>
            <FormulaTool aria-label="Select Function">
              <Svg size={12}>{icons.sigma}</Svg>
            </FormulaTool>
            <Caret aria-label="Select Function options">
              <Arrow />
            </Caret>
            <FormulaTool aria-label="Formula">
              <Svg size={14}>{icons.equals}</Svg>
            </FormulaTool>
            <FormulaInput aria-label="Input line" />
            <Caret aria-label="Expand Formula Bar">
              <Arrow size={7} />
            </Caret>
          </FormulaBar>
          <SheetArea>
            <SheetView>
              <Sheet />
            </SheetView>
            <VScroll>
              <VThumb />
            </VScroll>
          </SheetArea>
          <HScroll>
            <HThumb />
          </HScroll>
          <TabBar>
            {['first', 'prev', 'next', 'last'].map(n => (
              <TabNav key={n} aria-label={n + ' sheet'}>
                <Svg size={14}>{icons[n]}</Svg>
              </TabNav>
            ))}
            <AddSheet aria-label="Add Sheet">
              <Svg>{icons.addSheet}</Svg>
            </AddSheet>
            {['Ratenplan', 'Übersicht', 'Anleitung'].map(t => (
              <Tab key={t} $active={t === tab} onClick={() => setTab(t)}>
                {t}
              </Tab>
            ))}
          </TabBar>
        </Document>
        <Sidebar>
          <SidebarHandle aria-label="Collapse sidebar">
            <svg width="5" height="6" viewBox="0 0 5 6" aria-hidden="true">
              <path d="M1 0l3 3-3 3z" fill="#fff" />
            </svg>
          </SidebarHandle>
          {sidebarTools.map(([icon, label]) => (
            <Tool key={icon} aria-label={label}>
              <Svg>{icons[icon]}</Svg>
            </Tool>
          ))}
        </Sidebar>
      </Workspace>
      <StatusBar>
        <StatusItem>
          <Svg size={12}>{icons.saved}</Svg>
        </StatusItem>
        <StatusItem $start>Sheet 3 of 3</StatusItem>
        <StatusItem />
        <StatusItem>PageStyle_Anleitung</StatusItem>
        <StatusItem>English (USA)</StatusItem>
        <StatusItem />
        <ModeItem>
          <Svg size={13}>{icons.selection}</Svg>
          <Svg size={12}>{icons.cursor}</Svg>
        </ModeItem>
        <StatusItem />
        <StatusItem />
        <StatusItem>Average: ; Sum: 0</StatusItem>
        <ZoomItem>
          <button aria-label="Zoom Out" onClick={() => setZoom(zoom - 5)}>
            <Svg size={8}>{icons.minus}</Svg>
          </button>
          <ZoomRange
            type="range"
            aria-label="Zoom"
            min="0"
            max="200"
            value={zoom}
            onChange={e => setZoom(Number(e.target.value))}
          />
          <button aria-label="Zoom In" onClick={() => setZoom(zoom + 5)}>
            <Svg size={8}>{icons.plus}</Svg>
          </button>
        </ZoomItem>
        <StatusItem>{zoom}%</StatusItem>
      </StatusBar>
    </Window>
  );
};

export default App;
